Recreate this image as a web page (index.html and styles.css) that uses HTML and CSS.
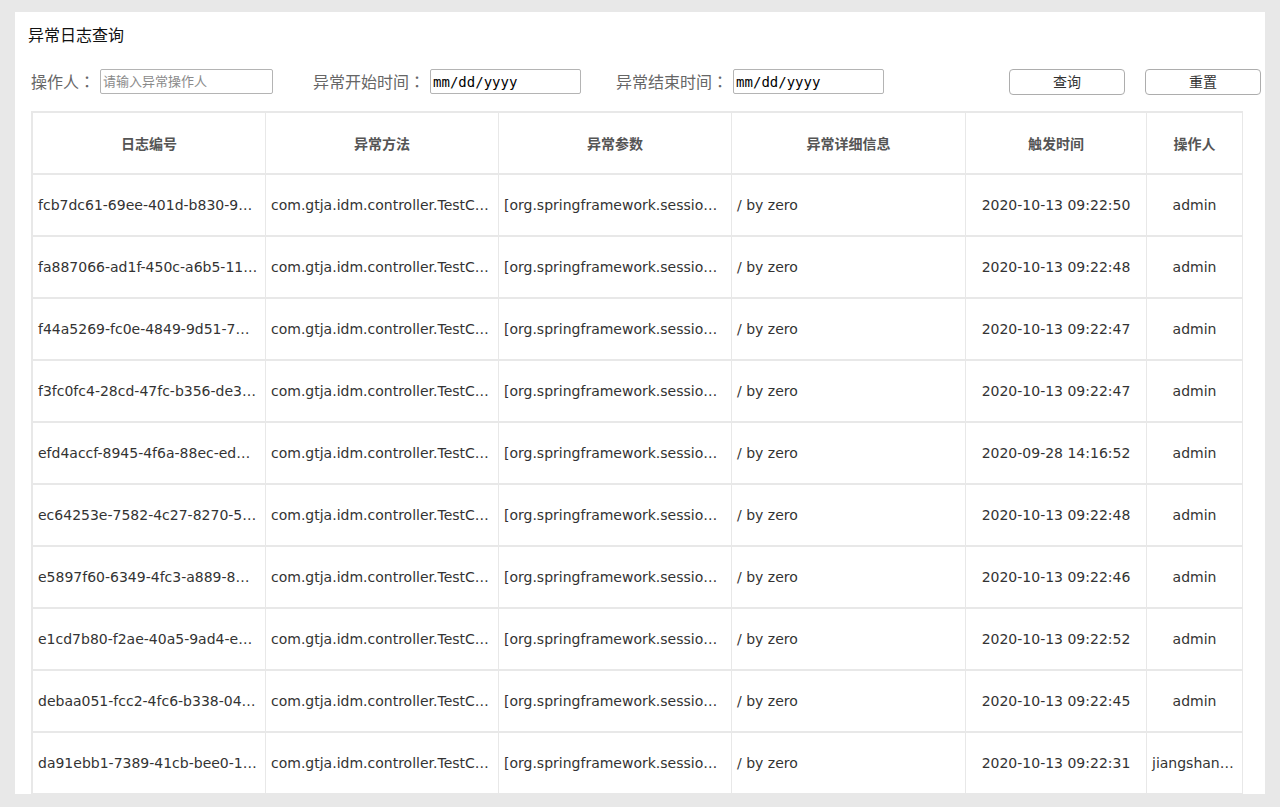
FILE: index.html
```html
<!DOCTYPE html>
<html lang="zh-CN">
<head>
<meta charset="utf-8">
<title>异常日志查询</title>
<link rel="stylesheet" href="styles.css">
</head>
<body>
<div class="panel">
  <div class="title">异常日志查询</div>
  <div class="toolbar">
    <label class="label">操作人<span class="colon" lang="ja">：</span></label>
    <input class="text-input" type="text" placeholder="请输入异常操作人">
    <label class="label label-start">异常开始时间<span class="colon" lang="ja">：</span></label>
    <input class="date-input" type="text" value="mm/dd/yyyy">
    <label class="label label-end">异常结束时间<span class="colon" lang="ja">：</span></label>
    <input class="date-input" type="text" value="mm/dd/yyyy">
    <div class="buttons">
      <button class="btn" type="button">查询</button>
      <button class="btn" type="button">重置</button>
    </div>
  </div>
  <table class="grid">
    <colgroup>
      <col class="c1"><col class="c2"><col class="c3"><col class="c4"><col class="c5"><col class="c6">
    </colgroup>
    <thead>
      <tr><th>日志编号</th><th>异常方法</th><th>异常参数</th><th>异常详细信息</th><th>触发时间</th><th>操作人</th></tr>
    </thead>
    <tbody>
      <tr><td>fcb7dc61-69ee-401d-b830-9a2f7e31c4d8</td><td>com.gtja.idm.controller.TestController.test()</td><td>[org.springframework.session.web.http.SessionRepositoryFilter]</td><td>/ by zero</td><td class="center">2020-10-13 09:22:50</td><td class="center">admin</td></tr>
      <tr><td>fa887066-ad1f-450c-a6b5-11c4e9f0a2b7</td><td>com.gtja.idm.controller.TestController.test()</td><td>[org.springframework.session.web.http.SessionRepositoryFilter]</td><td>/ by zero</td><td class="center">2020-10-13 09:22:48</td><td class="center">admin</td></tr>
      <tr><td>f44a5269-fc0e-4849-9d51-7b3e0c8a6f12</td><td>com.gtja.idm.controller.TestController.test()</td><td>[org.springframework.session.web.http.SessionRepositoryFilter]</td><td>/ by zero</td><td class="center">2020-10-13 09:22:47</td><td class="center">admin</td></tr>
      <tr><td>f3fc0fc4-28cd-47fc-b356-de3a91c07e45</td><td>com.gtja.idm.controller.TestController.test()</td><td>[org.springframework.session.web.http.SessionRepositoryFilter]</td><td>/ by zero</td><td class="center">2020-10-13 09:22:47</td><td class="center">admin</td></tr>
      <tr><td>efd4accf-8945-4f6a-88ec-ed52b9a1c307</td><td>com.gtja.idm.controller.TestController.test()</td><td>[org.springframework.session.web.http.SessionRepositoryFilter]</td><td>/ by zero</td><td class="center">2020-09-28 14:16:52</td><td class="center">admin</td></tr>
      <tr><td>ec64253e-7582-4c27-8270-5f1d3a9b6e08</td><td>com.gtja.idm.controller.TestController.test()</td><td>[org.springframework.session.web.http.SessionRepositoryFilter]</td><td>/ by zero</td><td class="center">2020-10-13 09:22:48</td><td class="center">admin</td></tr>
      <tr><td>e5897f60-6349-4fc3-a889-8b2e5d7b1f94</td><td>com.gtja.idm.controller.TestController.test()</td><td>[org.springframework.session.web.http.SessionRepositoryFilter]</td><td>/ by zero</td><td class="center">2020-10-13 09:22:46</td><td class="center">admin</td></tr>
      <tr><td>e1cd7b80-f2ae-40a5-9ad4-e6b0f3c2a817</td><td>com.gtja.idm.controller.TestController.test()</td><td>[org.springframework.session.web.http.SessionRepositoryFilter]</td><td>/ by zero</td><td class="center">2020-10-13 09:22:52</td><td class="center">admin</td></tr>
      <tr><td>debaa051-fcc2-4fc6-b338-04a7c9e2d5f1</td><td>com.gtja.idm.controller.TestController.test()</td><td>[org.springframework.session.web.http.SessionRepositoryFilter]</td><td>/ by zero</td><td class="center">2020-10-13 09:22:45</td><td class="center">admin</td></tr>
      <tr><td>da91ebb1-7389-41cb-bee0-1e8f4b6c2a39</td><td>com.gtja.idm.controller.TestController.test()</td><td>[org.springframework.session.web.http.SessionRepositoryFilter]</td><td>/ by zero</td><td class="center">2020-10-13 09:22:31</td><td class="center">jiangshanshan</td></tr>
    </tbody>
  </table>
</div>
</body>
</html>
```
FILE: styles.css
```css
html, body {
  margin: 0;
  padding: 0;
}
body {
  background: #e8e8e8;
  font-family: "DejaVu Sans", "Noto Sans CJK SC", sans-serif;
  padding-top: 12px;
  height: 807px;
  box-sizing: border-box;
  overflow: hidden;
}
.panel {
  margin: 0 15px;
  height: 782px;
  overflow: hidden;
  background: #ffffff;
  padding: 13px 4px 0 13px;
  box-sizing: border-box;
}
.title {
  font-size: 16px;
  line-height: 22px;
  color: #111;
}
.toolbar {
  display: flex;
  align-items: flex-start;
  margin-top: 22px;
  padding-left: 3px;
  height: 26px;
}
.label {
  font-size: 16px;
  line-height: 24px;
  color: #666;
  margin-right: 5px;
  white-space: nowrap;
}
.colon {
  font-family: "Noto Sans CJK JP", "Noto Sans CJK TC", sans-serif;
}
.label-start {
  margin-left: 40px;
}
.label-end {
  margin-left: 35px;
}
.text-input,
.date-input {
  height: 25px;
  box-sizing: border-box;
  border: 1px solid #b4b4b4;
  border-radius: 2px;
  padding: 0 2px;
  margin: 0;
  outline: none;
  color: #000;
}
.text-input {
  width: 173px;
  font-size: 13px;
  font-family: "DejaVu Sans", "Noto Sans CJK SC", sans-serif;
}
.text-input::placeholder {
  color: #8a8a8a;
}
.date-input {
  width: 151px;
  font-family: "DejaVu Sans Mono", monospace;
  font-size: 14px;
}
.buttons {
  margin-left: auto;
  display: flex;
  gap: 20px;
}
.btn {
  width: 116px;
  height: 26px;
  margin: 0;
  box-sizing: border-box;
  background: #fff;
  border: 1px solid #adadad;
  border-radius: 4px;
  font-size: 14px;
  line-height: 22px;
  color: #333;
  font-family: "DejaVu Sans", "Noto Sans CJK SC", sans-serif;
  padding: 0 0 1px;
}
.grid {
  margin-top: 16px;
  margin-left: 3px;
  width: 1212px;
  table-layout: fixed;
  border-collapse: separate;
  border-spacing: 0;
  border-top: 2px solid #e8e8e8;
  border-left: 2px solid #e8e8e8;
  font-size: 14px;
}
.c1 { width: 233px; }
.c2 { width: 233px; }
.c3 { width: 233px; }
.c4 { width: 234px; }
.c5 { width: 181px; }
.c6 { width: 96px; }
.grid th,
.grid td {
  height: 62px;
  box-sizing: border-box;
  padding: 0 5px;
  border-bottom: 2px solid #e8e8e8;
  border-right: 1px solid #e8e8e8;
  white-space: nowrap;
  overflow: hidden;
  text-overflow: ellipsis;
  vertical-align: middle;
}
.grid td:first-child {
  padding-right: 7.5px;
}
.grid th {
  font-weight: bold;
  color: #555;
  text-align: center;
}
.grid td {
  color: #333;
  text-align: left;
}
.grid td.center {
  text-align: center;
}
```
